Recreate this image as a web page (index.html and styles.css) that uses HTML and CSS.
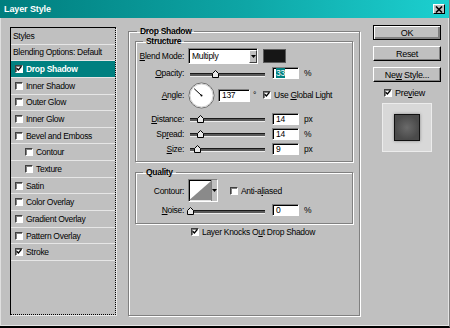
FILE: index.html
```html
<!DOCTYPE html>
<html>
<head>
  <title>Layer Style</title>
  <link rel="stylesheet" href="styles.css">
</head>
<body>
  <div class="dialog">
    <!-- Titelbalk -->
    <div class="titlebar">
      <span class="title">Layer Style</span>
      <span class="close">
        <svg width="8" height="7" viewBox="0 0 8 7"><path d="M1 0.5 L7 6.5 M7 0.5 L1 6.5" stroke="#000" stroke-width="1.6"/></svg>
      </span>
    </div>

    <div class="content">
      <!-- Lijst met effecten -->
      <div class="styles-list">
        <div class="item plain">Styles</div>
        <div class="item plain">Blending Options: Default</div>
        <div class="item selected"><span class="cb"><svg viewBox="0 0 7 7"><path d="M0.8 3.2 L2.8 5.3 L6.3 1"/></svg></span>Drop Shadow</div>
        <div class="item"><span class="cb"></span>Inner Shadow</div>
        <div class="item"><span class="cb"></span>Outer Glow</div>
        <div class="item"><span class="cb"></span>Inner Glow</div>
        <div class="item"><span class="cb"></span>Bevel and Emboss</div>
        <div class="item sub"><span class="cb"></span>Contour</div>
        <div class="item sub"><span class="cb"></span>Texture</div>
        <div class="item"><span class="cb"></span>Satin</div>
        <div class="item"><span class="cb"></span>Color Overlay</div>
        <div class="item"><span class="cb"></span>Gradient Overlay</div>
        <div class="item"><span class="cb"></span>Pattern Overlay</div>
        <div class="item"><span class="cb"><svg viewBox="0 0 7 7"><path d="M0.8 3.2 L2.8 5.3 L6.3 1"/></svg></span>Stroke</div>
      </div>

      <!-- Instellingen voor slagschaduw -->
      <fieldset class="group main">
        <legend>Drop Shadow</legend>

        <fieldset class="group inner structure">
          <legend>Structure</legend>

          <div class="row blend-row">
            <span class="label"><u>B</u>lend Mode:</span>
            <span class="select">
              <span class="select-text">Multiply</span>
              <span class="select-btn"><svg width="5" height="3" viewBox="0 0 5 3"><path d="M0 0 H5 L2.5 3 Z" fill="#000"/></svg></span>
            </span>
            <span class="swatch"></span>
          </div>

          <div class="row opacity-row">
            <span class="label"><u>O</u>pacity:</span>
            <span class="slider"><span class="thumb" style="left: calc(33% - 3px)"><svg width="7" height="8" viewBox="0 0 7 8"><path d="M0.5 3.5 L3.5 0.5 L6.5 3.5 V7.5 H0.5 Z" fill="#e8e8e8" stroke="#000"/></svg></span></span>
            <span class="field"><span class="hl">33</span></span>
            <span class="unit">%</span>
          </div>

          <div class="row angle-row">
            <span class="label"><u>A</u>ngle:</span>
            <svg class="dial" width="27" height="27" viewBox="0 0 27 27">
              <circle cx="13.5" cy="13.5" r="12.5" fill="#fff" stroke="#6a6a6a"/>
              <circle cx="13.5" cy="13.5" r="11.5" fill="none" stroke="#d0d0d0"/>
              <path d="M13.5 13.5 L6.2 6.7" stroke="#000" stroke-width="1"/>
              <circle cx="13.5" cy="13.5" r="1" fill="#000"/>
            </svg>
            <span class="field angle-field">137</span>
            <span class="unit deg">°</span>
            <span class="cb"><svg viewBox="0 0 7 7"><path d="M0.8 3.2 L2.8 5.3 L6.3 1"/></svg></span>
            <span class="cb-label">Use <u>G</u>lobal Light</span>
          </div>

          <div class="row distance-row">
            <span class="label"><u>D</u>istance:</span>
            <span class="slider"><span class="thumb" style="left: calc(13% - 3px)"><svg width="7" height="8" viewBox="0 0 7 8"><path d="M0.5 3.5 L3.5 0.5 L6.5 3.5 V7.5 H0.5 Z" fill="#e8e8e8" stroke="#000"/></svg></span></span>
            <span class="field">14</span>
            <span class="unit">px</span>
          </div>

          <div class="row">
            <span class="label">Sp<u>r</u>ead:</span>
            <span class="slider"><span class="thumb" style="left: calc(13% - 3px)"><svg width="7" height="8" viewBox="0 0 7 8"><path d="M0.5 3.5 L3.5 0.5 L6.5 3.5 V7.5 H0.5 Z" fill="#e8e8e8" stroke="#000"/></svg></span></span>
            <span class="field">14</span>
            <span class="unit">%</span>
          </div>

          <div class="row">
            <span class="label"><u>S</u>ize:</span>
            <span class="slider"><span class="thumb" style="left: calc(9% - 3px)"><svg width="7" height="8" viewBox="0 0 7 8"><path d="M0.5 3.5 L3.5 0.5 L6.5 3.5 V7.5 H0.5 Z" fill="#e8e8e8" stroke="#000"/></svg></span></span>
            <span class="field">9</span>
            <span class="unit">px</span>
          </div>
        </fieldset>

        <fieldset class="group inner quality">
          <legend>Quality</legend>

          <div class="row contour-row">
            <span class="label">Contour:</span>
            <span class="contour">
              <svg width="24" height="21" viewBox="0 0 24 21"><path d="M0 21 L24 0 V21 Z" fill="#8a8a8a"/></svg>
              <span class="contour-btn"><svg width="5" height="3" viewBox="0 0 5 3"><path d="M0 0 H5 L2.5 3 Z" fill="#000"/></svg></span>
            </span>
            <span class="cb aa"></span>
            <span class="cb-label">Anti-a<u>l</u>iased</span>
          </div>

          <div class="row noise-row">
            <span class="label"><u>N</u>oise:</span>
            <span class="slider"><span class="thumb" style="left: calc(0% - 3px)"><svg width="7" height="8" viewBox="0 0 7 8"><path d="M0.5 3.5 L3.5 0.5 L6.5 3.5 V7.5 H0.5 Z" fill="#e8e8e8" stroke="#000"/></svg></span></span>
            <span class="field">0</span>
            <span class="unit">%</span>
          </div>
        </fieldset>

        <div class="knockout">
          <span class="cb"><svg viewBox="0 0 7 7"><path d="M0.8 3.2 L2.8 5.3 L6.3 1"/></svg></span>
          <span class="cb-label">Layer Knocks O<u>u</u>t Drop Shadow</span>
        </div>
      </fieldset>

      <!-- Knoppen en voorbeeld -->
      <div class="side">
        <div class="button default"><span>OK</span></div>
        <div class="button"><span>Reset</span></div>
        <div class="button"><span>Ne<u>w</u> Style...</span></div>
        <div class="preview-toggle">
          <span class="cb"><svg viewBox="0 0 7 7"><path d="M0.8 3.2 L2.8 5.3 L6.3 1"/></svg></span>
          <span class="cb-label">Pre<u>v</u>iew</span>
        </div>
        <div class="preview">
          <div class="preview-swatch"></div>
        </div>
      </div>
    </div>
  </div>
</body>
</html>
```

FILE: styles.css
```css
/* Basis: geen marge, kleine Windows-achtige letter */
body {
  margin: 0;
  font-family: "Liberation Sans", Arial, sans-serif;
  font-size: 8.5px;
  letter-spacing: -0.3px;
  color: #000;
}

u {
  text-decoration: underline;
  text-underline-offset: 1px;
}

/* Het dialoogvenster */
.dialog {
  width: 450px;
  height: 328px;
  box-sizing: border-box;
  background-color: #c0c0c0;
  border-bottom: 2px solid #000;
  border-right: 1px solid #808080;
  box-shadow: inset 1px 0 0 #e0e0e0, inset -1px -1px 0 #e4e4e4;
}

/* Titelbalk */
.titlebar {
  height: 18px;
  display: flex;
  align-items: center;
  justify-content: space-between;
  padding: 0 4px;
  background: linear-gradient(90deg, #007e7e, #0ea6a6 55%, #1cd0d0);
}

.title {
  color: white;
  font-weight: bold;
  font-size: 9px;
  letter-spacing: -0.1px;
}

.close {
  width: 12px;
  height: 10px;
  box-sizing: border-box;
  display: flex;
  align-items: center;
  justify-content: center;
  background-color: #c0c0c0;
  border: 1px solid;
  border-color: #fff #000 #000 #fff;
}

/* Inhoud: drie kolommen */
.content {
  display: flex;
  align-items: flex-start;
}

/* Lijst met effecten links */
.styles-list {
  width: 106px;
  height: 288px;
  box-sizing: border-box;
  margin: 9px 0 0 10px;
  border: 1px dotted #000;
  border-top-style: solid;
  border-left-style: solid;
  box-shadow: 1px 1px 0 #e8e8e8;
}

.item {
  height: 16.65px;
  box-sizing: border-box;
  display: flex;
  align-items: center;
  padding-left: 4px;
  border-bottom: 1px solid #e6e6e6;
}

.item.plain {
  padding-left: 2px;
}

.item.sub {
  padding-left: 14px;
}

.item.selected {
  background-color: #008080;
  color: white;
  font-weight: bold;
}

.item .cb {
  margin-right: 3px;
}

/* Selectievakje */
.cb {
  width: 8px;
  height: 8px;
  box-sizing: border-box;
  flex-shrink: 0;
  display: inline-flex;
  background-color: white;
  border: 1px solid;
  border-color: #404040 #fff #fff #404040;
  box-shadow: inset 1px 1px 0 #808080;
}

.cb svg {
  width: 7px;
  height: 7px;
  margin: -1px 0 0 0;
  fill: none;
  stroke: #000;
  stroke-width: 1.6;
}

.cb-label {
  margin-left: 3px;
}

/* Groepsvakken met gegraveerde rand */
.group {
  margin: 0;
  box-sizing: border-box;
  border: 1px solid #808080;
  box-shadow: inset 1px 1px 0 #fff, 1px 1px 0 #fff;
  min-width: 0;
}

.group legend {
  font-weight: bold;
  line-height: 10px;
  padding: 0 3px;
  margin-left: 2px;
}

.main {
  width: 232px;
  height: 290px;
  margin: 8px 0 0 12px;
  padding: 0 6px;
}

.inner {
  width: 218px;
  padding: 0;
}

.inner legend {
  margin-left: 7px;
}

.structure {
  height: 126px;
}

.quality {
  height: 57px;
  margin-top: 5px;
}

/* Rijen met label en invoer */
.row {
  display: flex;
  align-items: center;
  height: 15px;
}

.label {
  width: 48px;
  text-align: right;
  margin-right: 4px;
  white-space: nowrap;
}

.blend-row {
  height: 16px;
  margin-top: 2px;
}

.opacity-row {
  height: 14px;
  margin-top: 2px;
}

.angle-row {
  height: 26px;
  margin-top: 2px;
}

.distance-row {
  margin-top: 3px;
}

.select {
  width: 70px;
  height: 16px;
  box-sizing: border-box;
  display: flex;
  background-color: white;
  border: 1px solid;
  border-color: #808080 #fff #fff #808080;
  box-shadow: inset 1px 1px 0 #000;
}

.select-text {
  flex: 1;
  padding: 2px 0 0 3px;
}

.select-btn {
  width: 8px;
  margin: 1px 0 0 0;
  box-sizing: border-box;
  display: flex;
  align-items: center;
  justify-content: center;
  background-color: #c0c0c0;
  border: 1px solid;
  border-color: #fff #404040 #404040 #fff;
}

.swatch {
  width: 23px;
  height: 14px;
  box-sizing: border-box;
  margin-left: 5px;
  background-color: #161616;
  border: 1px solid #5a5a5a;
}

/* Schuifregelaar */
.slider {
  position: relative;
  width: 75px;
  height: 2px;
  margin: 3px 0 0 2px;
  background-color: #5a5a5a;
  border-top: 1px solid #1a1a1a;
  border-bottom: 1px solid #ececec;
}

.thumb {
  position: absolute;
  bottom: -2px;
  width: 7px;
  height: 8px;
  display: flex;
}

.field {
  width: 27px;
  height: 12px;
  box-sizing: border-box;
  margin-left: 7px;
  padding: 1px 0 0 3px;
  background-color: white;
  border: 1px solid;
  border-color: #808080 #fff #fff #808080;
  box-shadow: inset 1px 1px 0 #000;
  line-height: 9px;
}

.hl {
  background-color: #008080;
  color: white;
}

.unit {
  margin-left: 5px;
}

.dial {
  display: block;
}

.angle-field {
  width: 32px;
  height: 13px;
  margin-left: 3px;
}

.unit.deg {
  margin-left: 3px;
  margin-right: 7px;
  align-self: flex-start;
  margin-top: 8px;
}

/* Kwaliteit */
.contour-row {
  height: 23px;
  margin-top: 2px;
}

.contour {
  width: 30px;
  height: 23px;
  box-sizing: border-box;
  display: flex;
  background-color: white;
  border: 1px solid;
  border-color: #808080 #fff #fff #808080;
  box-shadow: inset 1px 1px 0 #000;
}

.contour svg {
  display: block;
}

.contour-btn {
  width: 5px;
  display: flex;
  align-items: center;
  justify-content: center;
  background-color: #c0c0c0;
  border-left: 1px solid #808080;
}

.cb.aa {
  margin-left: 12px;
}

.noise-row {
  height: 14px;
  margin-top: 1px;
}

.knockout {
  display: flex;
  align-items: center;
  height: 10px;
  margin-top: 3px;
  padding-left: 56px;
}

/* Knoppen rechts */
.side {
  width: 68px;
  margin: 7px 0 0 13px;
}

.button {
  height: 15px;
  box-sizing: border-box;
  display: flex;
  align-items: center;
  justify-content: center;
  background-color: #c0c0c0;
  border: 1px solid;
  border-color: #fff #000 #000 #fff;
  box-shadow: inset -1px -1px 0 #808080;
  font-size: 9px;
  margin-bottom: 6px;
}

.button.default {
  border: 1px solid #000;
  box-shadow: inset 1px 1px 0 #fff, inset -2px -2px 0 #808080;
}

.preview-toggle {
  display: flex;
  align-items: center;
  height: 10px;
  padding-left: 11px;
  font-size: 9px;
}

.preview {
  width: 50px;
  height: 49px;
  box-sizing: border-box;
  margin: 5px 0 0 9px;
  display: flex;
  align-items: center;
  justify-content: center;
  background-color: #d8d8d8;
  border: 1px solid #ececec;
}

.preview-swatch {
  width: 26px;
  height: 27px;
  box-sizing: border-box;
  background: radial-gradient(circle, #6a6a6a, #4a4a4a 70%);
  border: 1px solid #111;
  box-shadow: 0 0 3px #8a8a8a;
}
```
